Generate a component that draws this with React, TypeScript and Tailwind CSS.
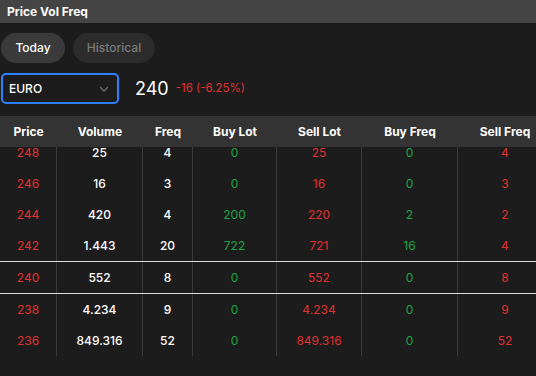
import React from "react";

const rows = [
  { price: "248", vol: "25", freq: "4", buyLot: "0", sellLot: "25", buyFreq: "0", sellFreq: "4" },
  { price: "246", vol: "16", freq: "3", buyLot: "0", sellLot: "16", buyFreq: "0", sellFreq: "3" },
  { price: "244", vol: "420", freq: "4", buyLot: "200", sellLot: "220", buyFreq: "2", sellFreq: "2" },
  { price: "242", vol: "1.443", freq: "20", buyLot: "722", sellLot: "721", buyFreq: "16", sellFreq: "4" },
  { price: "240", vol: "552", freq: "8", buyLot: "0", sellLot: "552", buyFreq: "0", sellFreq: "8", current: true },
  { price: "238", vol: "4.234", freq: "9", buyLot: "0", sellLot: "4.234", buyFreq: "0", sellFreq: "9" },
  { price: "236", vol: "849.316", freq: "52", buyLot: "0", sellLot: "849.316", buyFreq: "0", sellFreq: "52" },
];

const cols = "grid grid-cols-[57px_86px_50px_84px_85px_96px_94px]";

export default function App() {
  return (
    <div className="w-[536px] h-[376px] overflow-hidden bg-[#1c1c1c] text-white font-['Inter',sans-serif] text-[12px]">
      {/* title */}
      <div className="h-[23px] bg-[#444444] px-[7px] flex items-center font-bold text-[12px]">Price Vol Freq</div>

      {/* tabs */}
      <div className="flex gap-[8px] mt-[10px] pl-[1px]">
        <div className="h-[30px] w-[64px] rounded-full bg-[#3a3a3a] flex items-center justify-center font-medium">Today</div>
        <div className="h-[30px] w-[82px] rounded-full bg-[#2c2c2c] text-[#7a7a7a] flex items-center justify-center font-medium">Historical</div>
      </div>

      {/* select + last price */}
      <div className="flex items-center mt-[10px] pl-[1px]">
        <div className="w-[118px] h-[31px] border-2 border-[#2a7fff] rounded-[5px] flex items-center justify-between pl-[6px] pr-[8px]">
          <span className="font-medium">EURO</span>
          <svg width="10" height="6" viewBox="0 0 10 6" fill="none" stroke="#6b6b6b" strokeWidth="1.5">
            <path d="M1 1l4 4 4-4" />
          </svg>
        </div>
        <span className="ml-[16px] text-[18px] leading-none">240</span>
        <span className="ml-[7px] text-[11.5px] text-[#e03131]">-16 (-6.25%)</span>
      </div>

      {/* table */}
      <div className="mt-[12px]">
        <div className={`${cols} h-[31px] bg-[#333333] font-bold`}>
          <div className="flex items-center justify-center">Price</div>
          <div className="flex items-center justify-center">Volume</div>
          <div className="flex items-center justify-center">Freq</div>
          <div className="flex items-center justify-center">Buy Lot</div>
          <div className="flex items-center justify-center">Sell Lot</div>
          <div className="flex items-center justify-center">Buy Freq</div>
          <div className="flex items-center justify-center">Sell Freq</div>
        </div>
        {rows.map((r, i) => {
          // first row is partly scrolled under the header
          const cell =
            i === 0
              ? "h-[21px] flex items-start justify-center leading-[12px] border-r border-[#3a3a3a]"
              : "h-[31px] flex items-center justify-center border-r border-[#3a3a3a]";
          return (
            <div key={r.price} className={`${cols} ${r.current ? "border-y border-[#dddddd]" : ""}`}>
              <div className={`${cell} text-[#e03131]`}>{r.price}</div>
              <div className={`${cell} font-medium`}>{r.vol}</div>
              <div className={`${cell} font-medium`}>{r.freq}</div>
              <div className={`${cell} text-[#1ea446]`}>{r.buyLot}</div>
              <div className={`${cell} text-[#e03131]`}>{r.sellLot}</div>
              <div className={`${cell} text-[#1ea446]`}>{r.buyFreq}</div>
              <div className={`${cell} text-[#e03131] border-r-0`}>{r.sellFreq}</div>
            </div>
          );
        })}
      </div>
    </div>
  );
}
